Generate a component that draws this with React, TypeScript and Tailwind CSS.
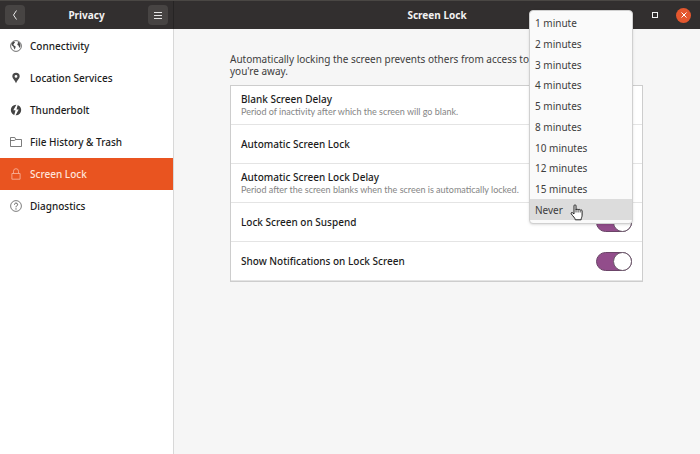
import { useState } from 'react'
import type { ReactNode } from 'react'
import clsx from 'clsx'

const iconClass = 'h-3 w-3 shrink-0'

function GlobeIcon() {
  return (
    <svg viewBox="0 0 12 12" className={iconClass} aria-hidden="true">
      <circle cx="6" cy="6" r="5.4" fill="none" stroke="#4a4a4a" strokeWidth="0.8" />
      <path
        d="M1.800 3 3.400 1.600 4.900 1.900 4.800 2.800 4.200 3.200 3.800 4.200 3.200 4.800 4.400 5.700 5.700 6.400 5.300 8.200 4.500 9.500 4 8.200 3.400 6.700 2 5.500 1.500 4.500zM7.500 1.700 9.200 2.300 10.300 4.200 10.400 6.300 9.700 7.700 9 7.200 8.700 5.700 7.500 5.100 7.300 4.100 8.200 3.100z"
        fill="#4a4a4a"
      />
    </svg>
  )
}

function PinIcon() {
  return (
    <svg viewBox="0 0 12 12" className={iconClass} aria-hidden="true">
      <path
        d="M6 .8a3.700 3.700 0 0 0-3.700 3.700C2.300 6.700 5 8.300 6 11.200 7 8.300 9.700 6.700 9.700 4.500A3.700 3.700 0 0 0 6 .8zm0 2.200a1.400 1.400 0 1 1 0 2.800A1.400 1.400 0 0 1 6 3z"
        fill="#4a4a4a"
      />
    </svg>
  )
}

function ThunderboltIcon() {
  return (
    <svg viewBox="0 0 12 12" className={iconClass} aria-hidden="true">
      <circle cx="6" cy="6" r="5.200" fill="#444" />
      <path d="M6.800 0 3.300 6.300H5.500L4 12H5.200L8.700 5.600H6.500L8 0z" fill="#fff" />
    </svg>
  )
}

function FolderIcon() {
  return (
    <svg viewBox="0 0 12 12" className={iconClass} aria-hidden="true">
      <path
        d="M.5 10.500v-9h4.300l1 2h5.700v7zM.5 4.500h3.800l1.500-1"
        fill="none"
        stroke="#5c5c5c"
        strokeWidth="0.8"
        strokeLinejoin="round"
      />
    </svg>
  )
}

function LockIcon() {
  return (
    <svg viewBox="0 0 12 12" className={iconClass} aria-hidden="true">
      <path
        d="M1.900 5.500h8.200v5.700H1.900zM3.500 5.500V3.200a2.500 2.500 0 0 1 5 0v2.300"
        fill="none"
        stroke="#f9b9a2"
        strokeWidth="0.8"
        strokeLinejoin="round"
      />
    </svg>
  )
}

function HelpIcon() {
  return (
    <svg viewBox="0 0 12 12" className={iconClass} aria-hidden="true">
      <circle cx="6" cy="6" r="5.400" fill="none" stroke="#5c5c5c" strokeWidth="0.8" />
      <path
        d="M4.500 4.600C4.500 2.500 7.600 2.600 7.600 4.500 7.600 5.800 6 5.800 6 7.300"
        fill="none"
        stroke="#4a4a4a"
        strokeWidth="0.9"
      />
      <circle cx="6" cy="8.900" r="0.600" fill="#4a4a4a" />
    </svg>
  )
}

function HandCursor() {
  return (
    <svg viewBox="0 0 14 18" className="h-[18px] w-3.5" aria-hidden="true">
      <path
        d="M4 2.800C4 1.500 6 1.500 6 2.800V7c.1-1.100 2-1.100 2.100 0 .2-1 2-.9 2.100.3.300-.8 1.900-.6 1.900.7v4.200c0 1.800-.8 2.400-1 4.600H5.300C5 14.700 3 13.500 1.300 10.900.6 9.700 1.900 9 2.800 9.900L4 11z"
        fill="#fff"
        stroke="#222"
        strokeWidth="1"
        strokeLinejoin="round"
      />
      <path d="M6 6.500v3M8.100 7v2.500M10.200 7.300v2.200" stroke="#222" strokeWidth="0.8" />
    </svg>
  )
}

const navItems = [
  { id: 'connectivity', label: 'Connectivity', icon: <GlobeIcon /> },
  { id: 'location', label: 'Location Services', icon: <PinIcon /> },
  { id: 'thunderbolt', label: 'Thunderbolt', icon: <ThunderboltIcon /> },
  { id: 'history', label: 'File History & Trash', icon: <FolderIcon /> },
  { id: 'lock', label: 'Screen Lock', icon: <LockIcon /> },
  { id: 'diagnostics', label: 'Diagnostics', icon: <HelpIcon /> },
]

const delays = [
  '1 minute',
  '2 minutes',
  '3 minutes',
  '4 minutes',
  '5 minutes',
  '8 minutes',
  '10 minutes',
  '12 minutes',
  '15 minutes',
  'Never',
]

function Switch({ id, defaultChecked }: { id: string; defaultChecked?: boolean }) {
  return (
    <span className="relative flex h-[19px] w-9 shrink-0">
      <input
        id={id}
        type="checkbox"
        role="switch"
        defaultChecked={defaultChecked}
        className="peer h-full w-full appearance-none rounded-full border border-[#6b4468] bg-gray-300 checked:bg-[#924d8b]"
      />
      <span className="pointer-events-none absolute top-0 left-0 h-[19px] w-[19px] rounded-full border border-[#6b5a6a] bg-white peer-checked:right-0 peer-checked:left-auto" />
    </span>
  )
}

type RowProps = {
  id: string
  title: string
  hint?: string
  children: ReactNode
}

function Row({ id, title, hint, children }: RowProps) {
  return (
    <div className="flex h-[39px] items-center justify-between border-b border-[#e4e4e4] px-2.5 last:border-b-0">
      <div className="flex flex-col">
        <label htmlFor={id} className="leading-[13px] font-medium text-[#1c1c1c]">
          {title}
        </label>
        {hint && (
          <span className="font-['Lato','Noto_Sans',sans-serif] text-[9px] leading-[11px] text-[#858585]">
            {hint}
          </span>
        )}
      </div>
      {children}
    </div>
  )
}

export default function App() {
  const [active, setActive] = useState('lock')
  const [delay, setDelay] = useState('Never')

  return (
    <div className="flex min-h-screen flex-col bg-[#f6f6f6] font-['Noto_Sans','Open_Sans',sans-serif] text-[10px]">
      {/* Title bar */}
      <header className="flex h-[29px] shrink-0 border-t border-[#4a4744] bg-[#322f2f] text-[#f2f2f2]">
        <div className="flex w-[174px] shrink-0 items-center justify-between border-r border-[#262424] px-[5px]">
          <button
            aria-label="Back"
            className="flex h-5 w-5 items-center justify-center rounded-sm bg-[#474443]"
          >
            <svg viewBox="0 0 8 12" className="h-3 w-2" aria-hidden="true">
              <path d="M5.500 1.500 2.500 6l3 4.500" fill="none" stroke="#e6e6e6" strokeWidth="1" />
            </svg>
          </button>
          <h2 className="font-bold">Privacy</h2>
          <button
            aria-label="Menu"
            className="flex h-5 w-5 items-center justify-center rounded-sm bg-[#474443]"
          >
            <svg viewBox="0 0 8 8" className="h-2 w-2" aria-hidden="true">
              <path d="M0 1.500h8M0 4.500h8M0 7.500h8" stroke="#e6e6e6" strokeWidth="1" />
            </svg>
          </button>
        </div>
        <div className="relative flex flex-1 items-center justify-center">
          <h1 className="font-bold">Screen Lock</h1>
          <div className="absolute inset-y-0 right-[9px] flex items-center gap-[18px]">
            <button aria-label="Minimize" className="mr-1 flex h-1.5 w-1.5 items-end">
              <span className="h-px w-full bg-[#f2f2f2]" />
            </button>
            <button aria-label="Maximize" className="h-1.5 w-1.5 border border-[#f2f2f2]" />
            <button
              aria-label="Close"
              className="flex h-[15px] w-[15px] items-center justify-center rounded-full bg-[#e4572e]"
            >
              <svg viewBox="0 0 6 6" className="h-1.5 w-1.5" aria-hidden="true">
                <path d="M.5.5l5 5M5.500.5l-5 5" stroke="#fff" strokeWidth="1" />
              </svg>
            </button>
          </div>
        </div>
      </header>

      <div className="flex flex-1">
        {/* Sidebar */}
        <nav className="w-[174px] shrink-0 border-r border-[#d8d8d8] bg-white pt-px">
          {navItems.map((item) => (
            <button
              key={item.id}
              onClick={() => setActive(item.id)}
              className={clsx(
                'flex h-8 w-full items-center gap-2 px-2.5 text-left font-medium',
                active === item.id ? 'bg-[#e95420] text-[#ffe4da]' : 'text-[#1c1c1c]'
              )}
            >
              {item.icon}
              {item.label}
            </button>
          ))}
        </nav>

        {/* Settings */}
        <main className="min-w-0 flex-1 pt-6 pr-[57px] pl-14">
          <p className="pb-2 leading-3 text-[#3d3d3d]">
            Automatically locking the screen prevents others from access to the computer while
            you're away.
          </p>

          <div className="relative border border-[#cdcdcd] bg-white">
            <Row
              id="blank-delay"
              title="Blank Screen Delay"
              hint="Period of inactivity after which the screen will go blank."
            >
              <select
                id="blank-delay"
                value={delay}
                onChange={(e) => setDelay(e.target.value)}
                className="w-20 bg-transparent"
              >
                {delays.map((d) => (
                  <option key={d}>{d}</option>
                ))}
              </select>
            </Row>
            <Row id="auto-lock" title="Automatic Screen Lock">
              <Switch id="auto-lock" defaultChecked />
            </Row>
            <Row
              id="lock-delay"
              title="Automatic Screen Lock Delay"
              hint="Period after the screen blanks when the screen is automatically locked."
            >
              <select id="lock-delay" className="w-20 bg-transparent">
                <option>30 seconds</option>
              </select>
            </Row>
            <Row id="suspend" title="Lock Screen on Suspend">
              <Switch id="suspend" defaultChecked />
            </Row>
            <Row id="notifications" title="Show Notifications on Lock Screen">
              <Switch id="notifications" defaultChecked />
            </Row>

            <div
              role="listbox"
              aria-label="Blank Screen Delay"
              className="absolute -top-[76px] right-[9px] z-10 grid h-[214px] w-[104px] auto-rows-fr rounded border border-[#d0d0d0] bg-[#fafafa] pt-0.5 pb-[3px] text-[#3d3d3d] shadow-sm"
            >
              {delays.map((d) => (
                <button
                  key={d}
                  role="option"
                  aria-selected={d === delay}
                  onClick={() => setDelay(d)}
                  className={clsx(
                    'flex items-center px-[5px] text-left leading-3',
                    d === delay && 'bg-[#dcdcdc]'
                  )}
                >
                  {d}
                </button>
              ))}
              <span className="pointer-events-none absolute bottom-0.5 left-10">
                <HandCursor />
              </span>
            </div>
          </div>
        </main>
      </div>
    </div>
  )
}
